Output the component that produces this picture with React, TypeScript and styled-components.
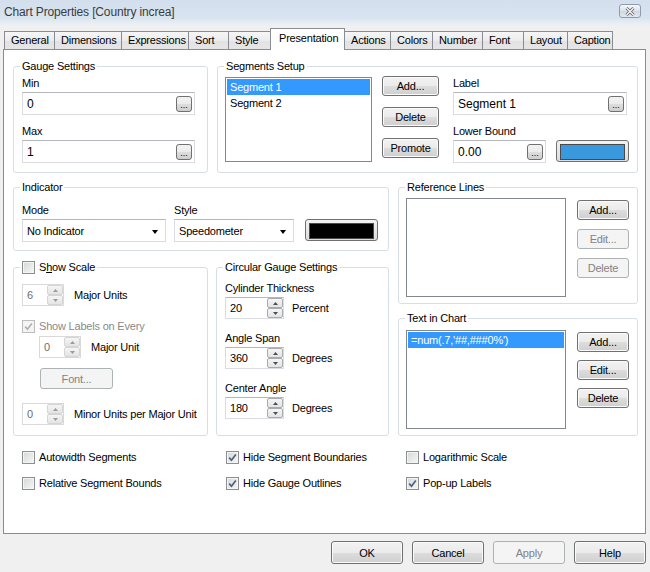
import React from "react";
import styled, { createGlobalStyle, css } from "styled-components";

const GlobalStyle = createGlobalStyle`
  body {
    margin: 0;
    background: #f0f0f0;
    font-family: "Liberation Sans", Arial, sans-serif;
    font-size: 11px;
    letter-spacing: -0.2px;
    color: #000;
  }
  * { box-sizing: border-box; }
`;

const Window = styled.div`
  width: 650px;
  height: 572px;
  background: #f0f0f0;
  overflow: hidden;
`;

const TitleBar = styled.div`
  height: 26px;
  display: flex;
  align-items: center;
  justify-content: space-between;
  padding: 0 9px 2px 4px;
  background: linear-gradient(#d3dfed 0%, #d9e4f1 70%, #e9eef4 90%, #f0f0f0 100%);
`;

const TitleText = styled.span`
  font-size: 12px;
  letter-spacing: -0.15px;
  color: #3b3b3b;
`;

const CloseButton = styled.div`
  width: 22px;
  height: 14px;
  margin-top: -2px;
  border: 1px solid #8e9bad;
  border-radius: 3px;
  background: linear-gradient(#f4f6f9, #dde3ea 50%, #cfd7e1 51%, #e2e8ef);
  display: flex;
  align-items: center;
  justify-content: center;
`;

const TabStrip = styled.div`
  display: flex;
  align-items: flex-end;
  height: 21px;
  margin: 2px 0 0 4px;
  position: relative;
  z-index: 1;
`;

const Tab = styled.div<{ $w: number; $active?: boolean }>`
  width: ${(p) => p.$w}px;
  height: 18px;
  margin-right: -1px;
  padding-left: 6px;
  line-height: 17px;
  border: 1px solid #898c95;
  border-bottom: none;
  background: linear-gradient(#f6f6f6, #ececec 50%, #e2e2e2 51%, #e6e6e6);
  white-space: nowrap;
  ${(p) =>
    p.$active &&
    css`
      height: 22px;
      margin-bottom: -1px;
      padding-left: 8px;
      line-height: 19px;
      background: #fff;
      position: relative;
      z-index: 2;
    `}
`;

const Panel = styled.div`
  margin-left: 3px;
  width: 643px;
  height: 485px;
  border: 1px solid #898c95;
  background: #fff;
  padding: 16px 7px 0 9px;
`;

const Row = styled.div<{ $gap?: number; $top?: number }>`
  display: flex;
  gap: ${(p) => p.$gap ?? 0}px;
  margin-top: ${(p) => p.$top ?? 0}px;
`;

const Column = styled.div<{ $w: number; $gap?: number; $left?: number }>`
  width: ${(p) => p.$w}px;
  display: flex;
  flex-direction: column;
  gap: ${(p) => p.$gap ?? 0}px;
  margin-left: ${(p) => p.$left ?? 0}px;
`;

const Group = styled.div<{ $w: number; $h: number; $pad: string }>`
  position: relative;
  width: ${(p) => p.$w}px;
  height: ${(p) => p.$h}px;
  border: 1px solid #d5dfe5;
  border-radius: 3px;
  padding: ${(p) => p.$pad};
`;

const Caption = styled.div`
  position: absolute;
  top: -7px;
  left: 6px;
  padding: 0 2px;
  line-height: 13px;
  background: #fff;
  display: flex;
  align-items: center;
  gap: 4px;
`;

const FieldLabel = styled.div<{ $top?: number }>`
  line-height: 15px;
  margin-top: ${(p) => p.$top ?? 0}px;
  margin-bottom: 1px;
`;

const TextBox = styled.div<{ $w: number }>`
  width: ${(p) => p.$w}px;
  height: 23px;
  border: 1px solid #dadce2;
  border-top-color: #b3b6bd;
  background: #fff;
  display: flex;
  align-items: center;
  justify-content: space-between;
  padding: 0 2px 0 4px;
  font-size: 12px;
  letter-spacing: 0;
`;

const EllipsisButton = styled.div`
  width: 16px;
  height: 16px;
  border: 1px solid #707070;
  border-radius: 3px;
  background: linear-gradient(#f2f2f2, #ebebeb 50%, #dddddd 51%, #cfcfcf);
  font-size: 9px;
  line-height: 16px;
  text-align: center;
  letter-spacing: 0;
`;

const ListBox = styled.div<{ $w: number; $h: number }>`
  width: ${(p) => p.$w}px;
  height: ${(p) => p.$h}px;
  border: 1px solid #828790;
  background: #fff;
  padding: 1px;
`;

const ListItem = styled.div<{ $selected?: boolean }>`
  height: 16px;
  line-height: 16px;
  padding-left: 3px;
  white-space: nowrap;
  ${(p) =>
    p.$selected &&
    css`
      background: #3399ff;
      color: #fff;
    `}
`;

const Button = styled.div<{ $w: number; $h?: number; $disabled?: boolean }>`
  width: ${(p) => p.$w}px;
  height: ${(p) => p.$h ?? 20}px;
  border: 1px solid #707070;
  border-radius: 3px;
  background: linear-gradient(#f2f2f2, #ebebeb 50%, #dddddd 51%, #cfcfcf);
  box-shadow: inset 0 0 0 1px #fbfbfb;
  display: flex;
  align-items: center;
  justify-content: center;
  ${(p) =>
    p.$disabled &&
    css`
      border-color: #adb2b5;
      background: #f4f4f4;
      box-shadow: none;
      color: #838383;
    `}
`;

const ButtonStack = styled.div<{ $left: number; $top: number; $gap: number }>`
  display: flex;
  flex-direction: column;
  gap: ${(p) => p.$gap}px;
  margin-left: ${(p) => p.$left}px;
  margin-top: ${(p) => p.$top}px;
`;

const Swatch = styled.div<{ $color: string; $left: number }>`
  width: 73px;
  height: 22px;
  margin-left: ${(p) => p.$left}px;
  border: 1px solid #707070;
  border-radius: 3px;
  background: linear-gradient(#f2f2f2, #dddddd);
  padding: 3px;
  &::after {
    content: "";
    display: block;
    height: 100%;
    border: 1px solid #4a4a4a;
    background: ${(p) => p.$color};
  }
`;

const Select = styled.div<{ $w: number }>`
  width: ${(p) => p.$w}px;
  height: 23px;
  border: 1px solid #dadce2;
  border-top-color: #b3b6bd;
  background: #fff;
  display: flex;
  align-items: center;
  justify-content: space-between;
  padding: 0 7px 0 4px;
`;

const Arrow = styled.span`
  width: 0;
  height: 0;
  border-left: 3.5px solid transparent;
  border-right: 3.5px solid transparent;
  border-top: 4px solid #000;
  margin-top: 2px;
`;

const SpinRow = styled.div<{ $gap: number; $indent?: number; $top?: number }>`
  display: flex;
  align-items: center;
  gap: ${(p) => p.$gap}px;
  padding-left: ${(p) => p.$indent ?? 0}px;
  margin-top: ${(p) => p.$top ?? 0}px;
`;

const SpinBox = styled.div<{ $w: number; $disabled?: boolean }>`
  width: ${(p) => p.$w}px;
  height: 22px;
  border: 1px solid #dadce2;
  border-top-color: #b3b6bd;
  background: #fff;
  display: flex;
  align-items: center;
  justify-content: space-between;
  padding: 0 0 0 4px;
  color: ${(p) => (p.$disabled ? "#6d6d6d" : "#000")};
  ${(p) =>
    p.$disabled &&
    css`
      border-color: #d9d9d9;
    `}
`;

const SpinButtons = styled.div`
  width: 16px;
  height: 20px;
  display: flex;
  flex-direction: column;
`;

const SpinHalf = styled.div<{ $disabled?: boolean }>`
  flex: 1;
  border: 1px solid ${(p) => (p.$disabled ? "#d5d5d5" : "#a7abb0")};
  border-radius: 2px;
  background: linear-gradient(#f5f5f5, #e4e4e4);
  display: flex;
  align-items: center;
  justify-content: center;
`;

const CheckRow = styled.div<{ $top?: number; $disabled?: boolean }>`
  display: flex;
  align-items: center;
  gap: 4px;
  height: 16px;
  margin-top: ${(p) => p.$top ?? 0}px;
  color: ${(p) => (p.$disabled ? "#8a8a8a" : "#000")};
`;

const Box = styled.span<{ $disabled?: boolean }>`
  width: 13px;
  height: 13px;
  flex: none;
  border: 1px solid ${(p) => (p.$disabled ? "#bcbcbc" : "#8e8f8f")};
  background: ${(p) =>
    p.$disabled ? "#f4f4f4" : "linear-gradient(135deg, #d4d6d9, #f7f7f7)"};
  box-shadow: inset 0 0 0 1px #f4f4f4;
  display: flex;
  align-items: center;
  justify-content: center;
`;

const OptionsGrid = styled.div`
  display: grid;
  grid-template-columns: 204px 180px auto;
  row-gap: 10px;
  margin-top: 13px;
  padding-left: 9px;
`;

const Footer = styled.div`
  display: flex;
  justify-content: flex-end;
  gap: 9px;
  margin-top: 7px;
  padding-right: 4px;
`;

function Check({ checked, disabled }: { checked?: boolean; disabled?: boolean }) {
  return (
    <Box $disabled={disabled}>
      {checked && (
        <svg width="9" height="9" viewBox="0 0 9 9">
          <path
            d="M1.2 4.6 L3.5 7.2 L7.8 1.6"
            fill="none"
            stroke={disabled ? "#b0b0b0" : "#4a5e80"}
            strokeWidth="1.7"
          />
        </svg>
      )}
    </Box>
  );
}

function Option({ label, checked }: { label: string; checked?: boolean }) {
  return (
    <CheckRow>
      <Check checked={checked} />
      <span>{label}</span>
    </CheckRow>
  );
}

function Spinner({ value, w, disabled }: { value: string; w: number; disabled?: boolean }) {
  const arrow = disabled ? "#9a9a9a" : "#4d4d4d";
  return (
    <SpinBox $w={w} $disabled={disabled}>
      <span>{value}</span>
      <SpinButtons>
        <SpinHalf $disabled={disabled}>
          <svg width="5" height="3" viewBox="0 0 5 3">
            <path d="M0 3 L2.5 0 L5 3 Z" fill={arrow} />
          </svg>
        </SpinHalf>
        <SpinHalf $disabled={disabled}>
          <svg width="5" height="3" viewBox="0 0 5 3">
            <path d="M0 0 L2.5 3 L5 0 Z" fill={arrow} />
          </svg>
        </SpinHalf>
      </SpinButtons>
    </SpinBox>
  );
}

const tabs: [string, number][] = [
  ["General", 51],
  ["Dimensions", 68],
  ["Expressions", 68],
  ["Sort", 41],
  ["Style", 43],
  ["Presentation", 75],
  ["Actions", 47],
  ["Colors", 43],
  ["Number", 51],
  ["Font", 42],
  ["Layout", 45],
  ["Caption", 46],
];

export default function App() {
  return (
    <Window>
      <GlobalStyle />
      <TitleBar>
        <TitleText>Chart Properties [Country increa]</TitleText>
        <CloseButton>
          <svg width="10" height="9" viewBox="0 0 10 9">
            <path d="M1.5 1 L8.5 8 M8.5 1 L1.5 8" stroke="#6a6a6a" strokeWidth="3" />
            <path d="M1.5 1 L8.5 8 M8.5 1 L1.5 8" stroke="#f7f7f7" strokeWidth="1.3" />
          </svg>
        </CloseButton>
      </TitleBar>

      <TabStrip>
        {tabs.map(([name, w]) => (
          <Tab key={name} $w={w} $active={name === "Presentation"}>
            {name}
          </Tab>
        ))}
      </TabStrip>

      <Panel>
        <Row $gap={9}>
          <Group $w={195} $h={107} $pad="9px 12px 0 8px">
            <Caption>Gauge Settings</Caption>
            <FieldLabel>Min</FieldLabel>
            <TextBox $w={173}>
              <span>0</span>
              <EllipsisButton>...</EllipsisButton>
            </TextBox>
            <FieldLabel $top={9}>Max</FieldLabel>
            <TextBox $w={173}>
              <span>1</span>
              <EllipsisButton>...</EllipsisButton>
            </TextBox>
          </Group>

          <Group $w={421} $h={107} $pad="10px 0 0 7px">
            <Caption>Segments Setup</Caption>
            <Row>
              <ListBox $w={147} $h={85}>
                <ListItem $selected>Segment 1</ListItem>
                <ListItem>Segment 2</ListItem>
              </ListBox>
              <ButtonStack $left={10} $top={-1} $gap={11}>
                <Button $w={57}>Add...</Button>
                <Button $w={57}>Delete</Button>
                <Button $w={57}>Promote</Button>
              </ButtonStack>
              <Column $w={177} $left={14}>
                <FieldLabel $top={-1}>Label</FieldLabel>
                <TextBox $w={174}>
                  <span>Segment 1</span>
                  <EllipsisButton>...</EllipsisButton>
                </TextBox>
                <FieldLabel $top={9}>Lower Bound</FieldLabel>
                <Row>
                  <TextBox $w={93}>
                    <span>0.00</span>
                    <EllipsisButton>...</EllipsisButton>
                  </TextBox>
                  <Swatch $color="#3a98de" $left={10} />
                </Row>
              </Column>
            </Row>
          </Group>
        </Row>

        <Row $top={14}>
          <Column $w={376}>
            <Group $w={376} $h={64} $pad="15px 0 0 8px">
              <Caption>Indicator</Caption>
              <Row style={{ alignItems: "flex-end" }}>
                <Column $w={152}>
                  <FieldLabel>Mode</FieldLabel>
                  <Select $w={144}>
                    <span>No Indicator</span>
                    <Arrow />
                  </Select>
                </Column>
                <Column $w={131}>
                  <FieldLabel>Style</FieldLabel>
                  <Select $w={120}>
                    <span>Speedometer</span>
                    <Arrow />
                  </Select>
                </Column>
                <Swatch $color="#000" $left={0} style={{ marginBottom: 1 }} />
              </Row>
            </Group>

            <Row $gap={8} $top={16}>
              <Group $w={195} $h={169} $pad="16px 0 0 8px">
                <Caption>
                  <Check />
                  <span>
                    S<u>h</u>ow Scale
                  </span>
                </Caption>
                <SpinRow $gap={10}>
                  <Spinner value="6" w={42} disabled />
                  <span>Major Units</span>
                </SpinRow>
                <CheckRow $top={12} $disabled>
                  <Check checked disabled />
                  <span>Show Labels on Every</span>
                </CheckRow>
                <SpinRow $gap={10} $indent={17} $top={2}>
                  <Spinner value="0" w={42} disabled />
                  <span>Major Unit</span>
                </SpinRow>
                <Button $w={73} $h={21} $disabled style={{ marginLeft: 18, marginTop: 10 }}>
                  Font...
                </Button>
                <SpinRow $gap={10} $top={14}>
                  <Spinner value="0" w={42} disabled />
                  <span>Minor Units per Major Unit</span>
                </SpinRow>
              </Group>

              <Group $w={173} $h={169} $pad="13px 0 0 8px">
                <Caption>Circular Gauge Settings</Caption>
                <FieldLabel>Cylinder Thickness</FieldLabel>
                <SpinRow $gap={8}>
                  <Spinner value="20" w={59} />
                  <span>Percent</span>
                </SpinRow>
                <FieldLabel $top={12}>Angle Span</FieldLabel>
                <SpinRow $gap={8}>
                  <Spinner value="360" w={59} />
                  <span>Degrees</span>
                </SpinRow>
                <FieldLabel $top={12}>Center Angle</FieldLabel>
                <SpinRow $gap={8}>
                  <Spinner value="180" w={59} />
                  <span>Degrees</span>
                </SpinRow>
              </Group>
            </Row>
          </Column>

          <Column $w={240} $left={9} $gap={14}>
            <Group $w={240} $h={117} $pad="10px 0 0 7px">
              <Caption>Reference Lines</Caption>
              <Row>
                <ListBox $w={160} $h={99} />
                <ButtonStack $left={11} $top={2} $gap={9}>
                  <Button $w={52}>Add...</Button>
                  <Button $w={52} $disabled>
                    Edit...
                  </Button>
                  <Button $w={52} $disabled>
                    Delete
                  </Button>
                </ButtonStack>
              </Row>
            </Group>

            <Group $w={240} $h={118} $pad="11px 0 0 7px">
              <Caption>Text in Chart</Caption>
              <Row>
                <ListBox $w={160} $h={99}>
                  <ListItem $selected>=num(.7,'##,###0%')</ListItem>
                </ListBox>
                <ButtonStack $left={11} $top={2} $gap={8}>
                  <Button $w={52}>Add...</Button>
                  <Button $w={52}>Edit...</Button>
                  <Button $w={52}>Delete</Button>
                </ButtonStack>
              </Row>
            </Group>
          </Column>
        </Row>

        <OptionsGrid>
          <Option label="Autowidth Segments" />
          <Option label="Hide Segment Boundaries" checked />
          <Option label="Logarithmic Scale" />
          <Option label="Relative Segment Bounds" />
          <Option label="Hide Gauge Outlines" checked />
          <Option label="Pop-up Labels" checked />
        </OptionsGrid>
      </Panel>

      <Footer>
        <Button $w={72} $h={23}>OK</Button>
        <Button $w={72} $h={23}>Cancel</Button>
        <Button $w={72} $h={23} $disabled>
          Apply
        </Button>
        <Button $w={72} $h={23}>Help</Button>
      </Footer>
    </Window>
  );
}
